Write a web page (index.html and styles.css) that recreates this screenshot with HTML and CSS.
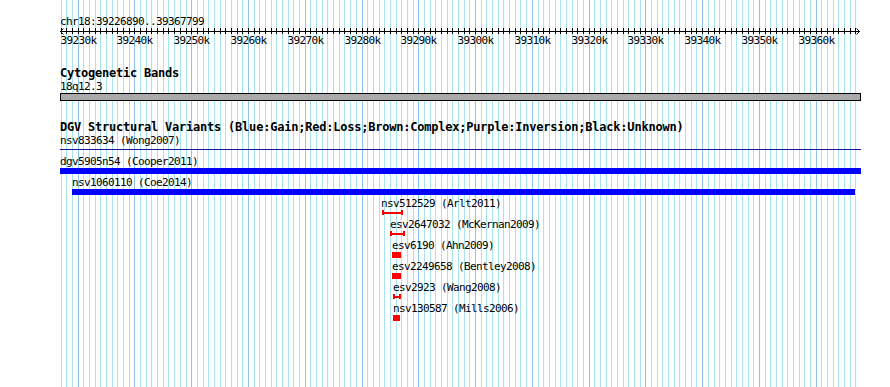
FILE: index.html
```html
<!DOCTYPE html>
<html lang="en">
<head>
    <meta charset="UTF-8">
    <title>chr18:39226890..39367799</title>
    <link rel="stylesheet" href="styles.css">
</head>
<body>
    <div class="browser">
        <svg class="grid" id="grid"></svg>

        <div class="ruler">
            <div class="ruler-title">chr18:39226890..39367799</div>
            <svg class="ruler-axis" id="axis" width="802" height="6"></svg>
            <div class="tick-labels" id="tickLabels"></div>
        </div>

        <div class="track">
            <div class="track-title">Cytogenetic Bands</div>
            <div class="label">18q12.3</div>
            <div class="band"></div>
        </div>

        <div class="track">
            <div class="track-title">DGV Structural Variants (Blue:Gain;Red:Loss;Brown:Complex;Purple:Inversion;Black:Unknown)</div>

            <div class="feature">
                <div class="label">nsv833634 (Wong2007)</div>
                <div class="glyph line" style="width:801px"></div>
            </div>
            <div class="feature">
                <div class="label">dgv5905n54 (Cooper2011)</div>
                <div class="glyph bar" style="width:801px"></div>
            </div>
            <div class="feature" style="margin-left:12px">
                <div class="label">nsv1060110 (Coe2014)</div>
                <div class="glyph bar" style="width:783px"></div>
            </div>
            <div class="feature" style="margin-left:321px">
                <div class="label">nsv512529 (Arlt2011)</div>
                <div class="glyph interval" style="width:21px;margin-left:1px"></div>
            </div>
            <div class="feature" style="margin-left:330px">
                <div class="label">esv2647032 (McKernan2009)</div>
                <div class="glyph interval" style="width:15px"></div>
            </div>
            <div class="feature" style="margin-left:332px">
                <div class="label">esv6190 (Ahn2009)</div>
                <div class="glyph block" style="width:9px"></div>
            </div>
            <div class="feature" style="margin-left:332px">
                <div class="label">esv2249658 (Bentley2008)</div>
                <div class="glyph block" style="width:9px"></div>
            </div>
            <div class="feature" style="margin-left:333px">
                <div class="label">esv2923 (Wang2008)</div>
                <div class="glyph interval" style="width:8px"></div>
            </div>
            <div class="feature" style="margin-left:333px">
                <div class="label">nsv130587 (Mills2006)</div>
                <div class="glyph block" style="width:7px"></div>
            </div>
        </div>
    </div>

    <script>
        const start = 39226890, end = 39367799, width = 800;
        const scale = width / (end - start + 1);
        const ns = "http://www.w3.org/2000/svg";

        function px(pos) {
            return Math.round((pos - start) * scale);
        }

        function line(svg, x1, y1, x2, y2, cls) {
            const l = document.createElementNS(ns, "line");
            l.setAttribute("x1", x1);
            l.setAttribute("y1", y1);
            l.setAttribute("x2", x2);
            l.setAttribute("y2", y2);
            l.setAttribute("class", cls);
            svg.appendChild(l);
        }

        const grid = document.getElementById("grid");
        const axis = document.getElementById("axis");
        const labels = document.getElementById("tickLabels");

        // axis with arrows at both ends
        line(axis, 0, 3.5, 800, 3.5, "axis");
        line(axis, 0.5, 3.5, 3.5, 0.5, "axis");
        line(axis, 0.5, 3.5, 3.5, 6.5, "axis");
        line(axis, 799.5, 3.5, 796.5, 0.5, "axis");
        line(axis, 799.5, 3.5, 796.5, 6.5, "axis");

        for (let k = Math.ceil(start / 1000); k * 1000 <= end; k++) {
            const x = px(k * 1000) + 0.5;
            const major = k % 10 === 0;
            line(grid, x, 0, x, 2000, major ? "major" : "minor");
            line(axis, x, 0, x, 6, "axis");
            if (major) {
                const t = document.createElement("div");
                t.className = "tick-label";
                t.style.left = x + "px";
                t.textContent = k + "k";
                labels.appendChild(t);
            }
        }
    </script>
</body>
</html>
```

FILE: styles.css
```css
body {
    margin: 0;
    background: #fff;
    color: #000;
    font-family: "DejaVu Sans Mono", "Liberation Mono", monospace;
    font-size: 11px;
    letter-spacing: -0.62px;
    line-height: 13px;
}
.browser {
    position: relative;
    z-index: 0;
    min-height: 387px;
    box-sizing: border-box;
    padding: 15px 0 0 60px;
}
.grid {
    position: absolute;
    z-index: -1;
    left: 60px;
    top: 0;
    width: 802px;
    height: 100%;
}
.grid .minor {
    stroke: #a8e4ec;
    stroke-width: 1;
}
.grid .major {
    stroke: #8cc4ec;
    stroke-width: 1;
}
.ruler-axis {
    display: block;
    overflow: visible;
}
.ruler-axis .axis {
    stroke: #000;
    stroke-width: 1;
}
.tick-labels {
    position: relative;
    height: 13px;
}
.tick-label {
    position: absolute;
    top: 0;
    transform: translateX(-50%);
    white-space: nowrap;
}
.track {
    margin-top: 20px;
}
.track-title {
    font-weight: bold;
    font-size: 12px;
    letter-spacing: -0.22px;
    line-height: 13px;
    white-space: nowrap;
}
.label {
    white-space: nowrap;
}
.band {
    width: 801px;
    height: 8px;
    box-sizing: border-box;
    border: 1px solid #000;
    background: #aaaaaa;
}
.feature {
    height: 21px;
}
.glyph {
    height: 6px;
}
.bar {
    background: #0000ff;
}
.block {
    background: #ff0000;
}
.line {
    background: linear-gradient(#1414a0, #1414a0) 0 2px / 100% 1px no-repeat;
}
.interval {
    height: 5px;
    box-sizing: border-box;
    border-left: 2px solid #ff0000;
    border-right: 2px solid #ff0000;
    background: linear-gradient(#ff0000, #ff0000) 0 2px / 100% 2px no-repeat;
}
```
